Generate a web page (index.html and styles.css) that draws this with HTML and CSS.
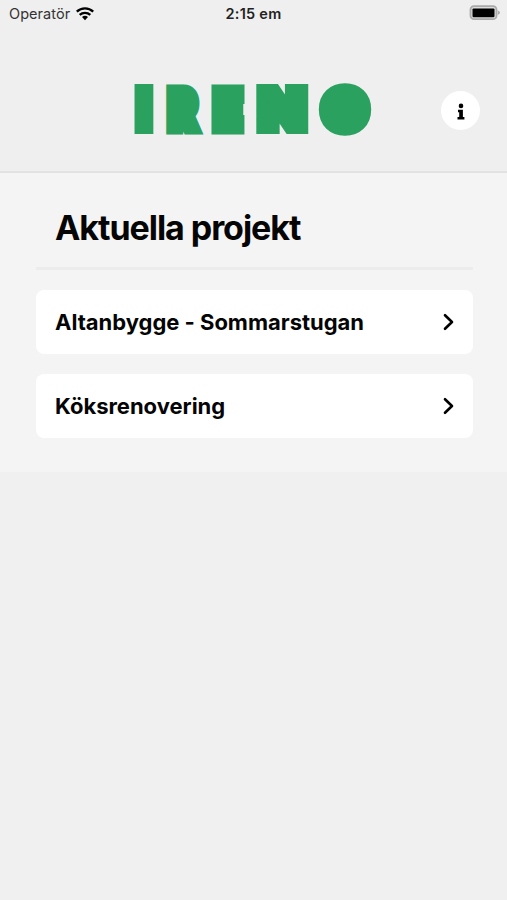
FILE: index.html
```html
<!DOCTYPE html>
<html lang="sv">
<head>
    <meta charset="UTF-8">
    <meta name="viewport" content="width=device-width, initial-scale=1.0">
    <title>Ireno</title>
    <link rel="stylesheet" href="styles.css">
</head>
<body>
    <div class="status-bar">
        <div class="carrier">
            <span>Operatör</span>
            <svg class="wifi" width="20" height="15" viewBox="0 0 20 15">
                <path d="M1.8 5.6a12 12 0 0 1 16.4 0" />
                <path d="M4.7 8.9a7.8 7.8 0 0 1 10.6 0" />
                <path class="wifi-dot" d="M7 11.1a4.4 4.4 0 0 1 6 0L10 14.2z" />
            </svg>
        </div>
        <div class="time">2:15 em</div>
        <div class="battery">
            <svg width="32" height="16" viewBox="0 0 32 16">
                <rect x="1.5" y="1.2" width="26" height="13" rx="3.5" fill="#ddd" stroke="#aaa" stroke-width="1.8" />
                <rect x="3.5" y="3.4" width="22" height="8.8" rx="1.2" fill="#000" />
                <path d="M28.8 5.5q4.5 2.2 0 4.4z" fill="#aaa" />
            </svg>
        </div>
    </div>

    <header class="header">
        <svg class="logo" width="240" height="88" viewBox="0 -16 240 88" role="img" aria-label="IRENO">
            <text class="letter" transform="translate(10 48.4) scale(0.9 1)">I</text>
            <text class="letter letter-tall" transform="translate(48.6 48.1) scale(0.78 1)">R</text>
            <text class="letter letter-tall" transform="translate(94 48.1) scale(0.84 1)">E</text>
            <text class="letter" transform="translate(148.2 48.4) scale(1.1 1)">N</text>
            <text class="letter letter-o" transform="translate(211 45.8) scale(1.02 0.975)">O</text>
        </svg>
        <button class="info" type="button" aria-label="Info">
            <svg width="8" height="18" viewBox="0 0 8 18">
                <circle cx="4" cy="2.9" r="2.3" />
                <path d="M1 6.8h4.9v7.2h1.5v2.6H.5V14h1.7V9.300H1z" />
            </svg>
        </button>
    </header>

    <main class="projects">
        <h1>Aktuella projekt</h1>
        <a class="project" href="#">
            <span>Altanbygge - Sommarstugan</span>
            <svg class="chevron" width="12" height="18" viewBox="0 0 12 18"><path d="M2 2.2l7 6.8-7 6.8" /></svg>
        </a>
        <a class="project" href="#">
            <span>Köksrenovering</span>
            <svg class="chevron" width="12" height="18" viewBox="0 0 12 18"><path d="M2 2.2l7 6.8-7 6.8" /></svg>
        </a>
    </main>
</body>
</html>
```
FILE: styles.css
```css
body {
    font-family: Inter, "Liberation Sans", sans-serif;
    background-color: #f0f0f0;
    color: #050505;
    margin: 0;
    min-height: 100vh;
}

.status-bar {
    display: grid;
    grid-template-columns: 1fr auto 1fr;
    align-items: center;
    height: 26px;
    padding: 0 6px 0 9px;
    background-color: #efefef;
    box-sizing: border-box;
}

.carrier {
    display: flex;
    align-items: center;
    gap: 5px;
    color: #333;
    font-size: 14.5px;
    letter-spacing: 0.05px;
}

.wifi {
    fill: none;
    stroke: #000;
    stroke-width: 2.3;
}

.wifi .wifi-dot {
    fill: #000;
    stroke: none;
}

.time {
    margin-right: 3px;
    font-size: 14.5px;
    font-weight: 600;
    letter-spacing: 0.25px;
    color: #222;
}

.battery {
    display: flex;
    justify-content: flex-end;
}

.header {
    display: grid;
    grid-template-columns: 1fr auto 1fr;
    align-items: center;
    height: 147px;
    padding: 24px 27px 0;
    background-color: #efefef;
    border-bottom: 2px solid #e2e2e2;
    box-sizing: border-box;
}

.logo {
    grid-column: 2;
    margin-top: -3px;
    fill: #2ba160;
}

.letter {
    font-size: 55px;
    font-weight: 900;
    text-anchor: middle;
    stroke: #2ba160;
    stroke-width: 10px;
    stroke-linejoin: miter;
}

.letter-tall {
    font-size: 54px;
    stroke-width: 11px;
}

.letter-o {
    font-size: 50px;
    stroke-width: 16px;
}

.info {
    display: flex;
    align-items: center;
    justify-content: center;
    justify-self: end;
    width: 39px;
    height: 39px;
    padding: 2px 0 0;
    border: none;
    border-radius: 50%;
    background-color: #fff;
}

.projects {
    padding: 25px 34px 34px 36px;
    background-color: #f4f4f4;
}

h1 {
    margin: 0 0 20px;
    padding: 9px 19px 19px;
    border-bottom: 3px solid #ececec;
    font-size: 34px;
    line-height: 41px;
    font-weight: 700;
    letter-spacing: -1.05px;
}

.project {
    display: flex;
    align-items: center;
    justify-content: space-between;
    height: 64px;
    margin-bottom: 20px;
    padding: 0 18px 1px 19px;
    border-radius: 8px;
    background-color: #fff;
    color: inherit;
    font-size: 22px;
    font-weight: 700;
    letter-spacing: -0.02px;
    text-decoration: none;
    box-sizing: border-box;
}

.project:last-child {
    margin-bottom: 0;
}

.chevron {
    fill: none;
    stroke: #000;
    stroke-width: 2.6;
    stroke-linecap: round;
    stroke-linejoin: round;
}
```
